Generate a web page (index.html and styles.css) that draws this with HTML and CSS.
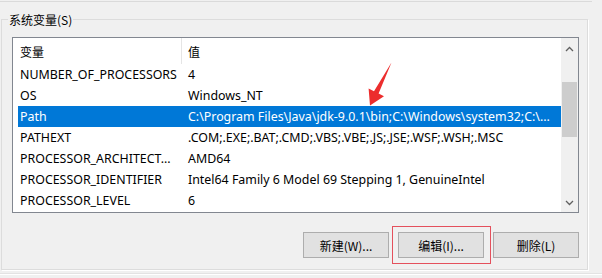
FILE: index.html
```html
<!DOCTYPE html>
<html lang="zh-CN">
<head>
<meta charset="utf-8">
<title>系统变量</title>
<link rel="stylesheet" href="styles.css">
</head>
<body>
<div class="topline"></div>
<fieldset class="group">
  <legend class="group-label">系统变量(S)</legend>
  <div class="listbox">
    <div class="table">
      <div class="thead">
        <div class="th th-name">变量</div>
        <div class="th th-value">值</div>
      </div>
      <div class="row"><div class="cell c1">NUMBER_OF_PROCESSORS</div><div class="cell c2">4</div></div>
      <div class="row"><div class="cell c1">OS</div><div class="cell c2">Windows_NT</div></div>
      <div class="row selected"><div class="cell c1">Path</div><div class="cell c2">C:\Program Files\Java\jdk-9.0.1\bin;C:\Windows\system32;C:\...</div></div>
      <div class="row"><div class="cell c1">PATHEXT</div><div class="cell c2">.COM;.EXE;.BAT;.CMD;.VBS;.VBE;.JS;.JSE;.WSF;.WSH;.MSC</div></div>
      <div class="row"><div class="cell c1">PROCESSOR_ARCHITECT...</div><div class="cell c2">AMD64</div></div>
      <div class="row"><div class="cell c1">PROCESSOR_IDENTIFIER</div><div class="cell c2">Intel64 Family 6 Model 69 Stepping 1, GenuineIntel</div></div>
      <div class="row"><div class="cell c1">PROCESSOR_LEVEL</div><div class="cell c2">6</div></div>
    </div>
    <div class="scrollbar">
      <svg class="sb-arrow" width="17" height="17" viewBox="0 0 17 17"><path d="M5 10 L8.5 6.5 L12 10" fill="none" stroke="#606060" stroke-width="1.3"/></svg>
      <div class="sb-track"><div class="sb-thumb"></div></div>
      <svg class="sb-arrow" width="17" height="17" viewBox="0 0 17 17"><path d="M5 7 L8.5 10.5 L12 7" fill="none" stroke="#606060" stroke-width="1.3"/></svg>
    </div>
  </div>
  <div class="buttons">
    <button class="btn">新建(W)...</button>
    <div class="btn-wrap">
      <button class="btn">编辑(I)...</button>
      <div class="highlight"></div>
    </div>
    <button class="btn">删除(L)</button>
  </div>
</fieldset>
<div class="bottomline"></div>
<svg class="red-arrow" width="40" height="52" viewBox="360 58 40 52">
  <polygon points="391.5,62.5 378.6,93.4 384,96.2 370,105.5 368.6,88.6 374,91.3" fill="#ec2d2d"/>
</svg>
</body>
</html>
```
FILE: styles.css
```css
html, body {
  margin: 0;
  padding: 0;
}
body {
  background: #f0f0f0;
  width: 602px;
  height: 278px;
  overflow: hidden;
  position: relative;
  font-family: "Noto Sans", "Noto Sans CJK SC", sans-serif;
  font-size: 12px;
  color: #000;
}
.topline {
  height: 1px;
  margin-top: 1px;
  background: #dadada;
  width: 592px;
}
.group {
  margin: 9px 0 0 1px;
  width: 587px;
  box-sizing: border-box;
  border: 1px solid #dcdcdc;
  box-shadow: 1px 1px 0 #fff;
  padding: 9px 8px 11px 10px;
  min-width: 0;
}
.group-label {
  font-family: "Noto Sans CJK SC", sans-serif;
  font-size: 12px;
  line-height: 17px;
  padding: 0 1px;
  margin-left: -4px;
  color: #000;
}
.listbox {
  display: grid;
  grid-template-columns: 1fr 17px;
  border: 1px solid #828790;
  background: #fff;
  height: 176px;
  box-sizing: border-box;
}
.table {
  display: flex;
  flex-direction: column;
  overflow: hidden;
}
.thead {
  display: grid;
  grid-template-columns: 168px 1fr;
  height: 26px;
  align-items: stretch;
}
.th {
  display: flex;
  align-items: center;
  font-family: "Noto Sans CJK SC", sans-serif;
  padding-top: 1px;
}
.th-name {
  padding-left: 7px;
}
.th-value {
  border-left: 1px solid #e5e5e5;
  padding-left: 6px;
}
.row {
  display: grid;
  grid-template-columns: 163px 1fr;
  height: 21px;
  margin-left: 5px;
  align-items: center;
  white-space: nowrap;
  font-size: 12.4px;
}
.cell {
  overflow: hidden;
  line-height: 21px;
}
.c1 {
  padding-left: 2px;
}
.c2 {
  padding-left: 7px;
}
.row.selected {
  background: #0078d7;
  color: #fff;
}
.scrollbar {
  display: flex;
  flex-direction: column;
  background: #f0f0f0;
}
.sb-arrow {
  display: block;
  flex: none;
  margin-top: 3px;
}
.sb-arrow:last-child {
  margin-top: 0;
  margin-bottom: 1px;
}
.sb-track {
  flex: 1;
  padding: 24px 1px 0 1px;
}
.sb-thumb {
  height: 55px;
  background: #cdcdcd;
}
.buttons {
  display: flex;
  justify-content: flex-end;
  gap: 9px;
  margin-top: 19px;
}
.btn {
  width: 86px;
  height: 26px;
  box-sizing: border-box;
  background: #e1e1e1;
  border: 1px solid #adadad;
  font-family: "Noto Sans CJK SC", sans-serif;
  font-size: 12px;
  color: #000;
  padding: 0;
  margin: 0;
}
.btn-wrap {
  position: relative;
  display: flex;
}
.highlight {
  position: absolute;
  top: -6px;
  left: -6px;
  right: -7px;
  bottom: -6px;
  border: 1px solid #e4505c;
}
.bottomline {
  margin-top: 3px;
  height: 1px;
  background: #e3e3e3;
  border-bottom: 1px solid #fff;
}
.red-arrow {
  position: absolute;
  left: 360px;
  top: 58px;
}
```
